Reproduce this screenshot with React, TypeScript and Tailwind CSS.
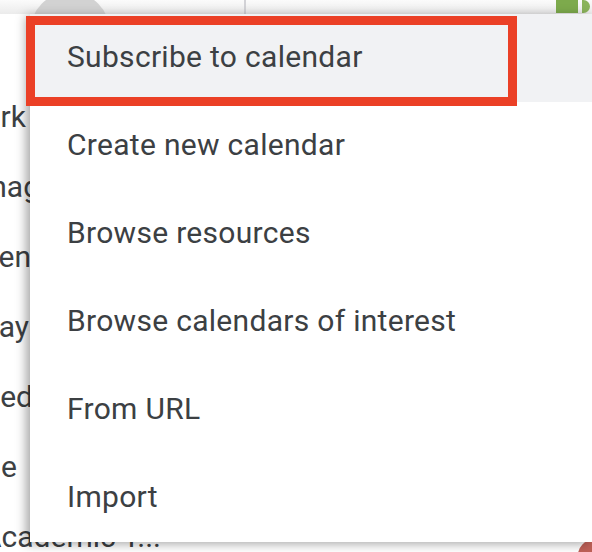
import React from 'react';

const menuItems = [
  'Subscribe to calendar',
  'Create new calendar',
  'Browse resources',
  'Browse calendars of interest',
  'From URL',
  'Import',
];

// fragments of the sidebar list that peek out behind the menu
const sideItems = [
  { label: 'Work', pad: 'pr-[34px]' },
  { label: 'Manag', pad: 'pr-[20px]' },
  { label: 'Even', pad: 'pr-[29px]' },
  { label: 'Birthday', pad: 'pr-[31px]' },
  { label: 'Declined', pad: 'pr-[27px]' },
  { label: 'Acme', pad: 'pr-[43px]' },
];

export default function App() {
  return (
    <div className="relative w-[592px] h-[552px] overflow-hidden bg-white text-[#3c4043] font-['Roboto',sans-serif]">
      {/* Page behind the menu */}
      <div className="flex flex-col h-full">
        <div className="relative flex h-[14px] shrink-0 bg-gradient-to-b from-[#fbfbfb] to-[#ebebeb]">
          <div className="w-[244px] shrink-0" />
          <div className="w-[2px] bg-[#d2d2d6]" />
          <div className="flex-1" />
          <div className="w-[22px] h-[13px] bg-[#7daa4c]" />
          <div className="w-[4px]" />
          <div className="w-[8px] h-[13px] rounded-r-full bg-[#8ab35a]" />
          <div className="w-[2px]" />
        </div>
        <div className="flex flex-1">
          <div className="w-[60px] shrink-0 flex flex-col pt-[68px] text-[30px] leading-[70px] whitespace-nowrap">
            {sideItems.map((s) => (
              <div key={s.label} className={`h-[70px] flex justify-end ${s.pad}`}>
                {s.label}
              </div>
            ))}
            <div className="h-[70px] -ml-[18px] text-left">Academic T...</div>
          </div>
          <div className="flex-1" />
        </div>
        <div className="flex h-[10px] shrink-0">
          <div className="w-[150px] shrink-0 bg-gradient-to-r from-white to-[#bdbdbd]" />
          <div className="flex flex-1 bg-gradient-to-b from-[#a9a9a9] to-[#c9c9c9]">
            <div className="w-[94px] shrink-0" />
            <div className="w-[2px] bg-[#8e8e8e]" />
            <div className="w-[311px]" />
            <div className="w-[2px] bg-[#8e8e8e]" />
            <div className="flex-1" />
          </div>
        </div>
      </div>

      {/* avatar partially hidden by menu */}
      <div className="absolute left-[30px] top-[-8px] w-[80px] h-[80px] rounded-full bg-[#d2d2d2]" />
      {/* red dot at bottom right */}
      <div className="absolute left-[578px] top-[540px] w-[30px] h-[30px] rounded-full bg-[#bf6158]" />

      {/* Add calendar menu */}
      <div className="absolute left-[30px] top-[14px] right-0 h-[528px] bg-white shadow-[-4px_2px_10px_rgba(0,0,0,0.35)] flex flex-col">
        {menuItems.map((item, i) => (
          <div
            key={item}
            className={`h-[88px] shrink-0 flex items-center pl-[37px] pb-[4px] text-[30px] tracking-[0.3px] whitespace-nowrap ${i === 0 ? 'bg-[#f1f2f4]' : ''}`}
          >
            {item}
          </div>
        ))}
      </div>

      {/* annotation box */}
      <div className="absolute left-[26px] top-[16px] w-[491px] h-[90px] border-[9px] border-[#eb4026]" />
    </div>
  );
}
